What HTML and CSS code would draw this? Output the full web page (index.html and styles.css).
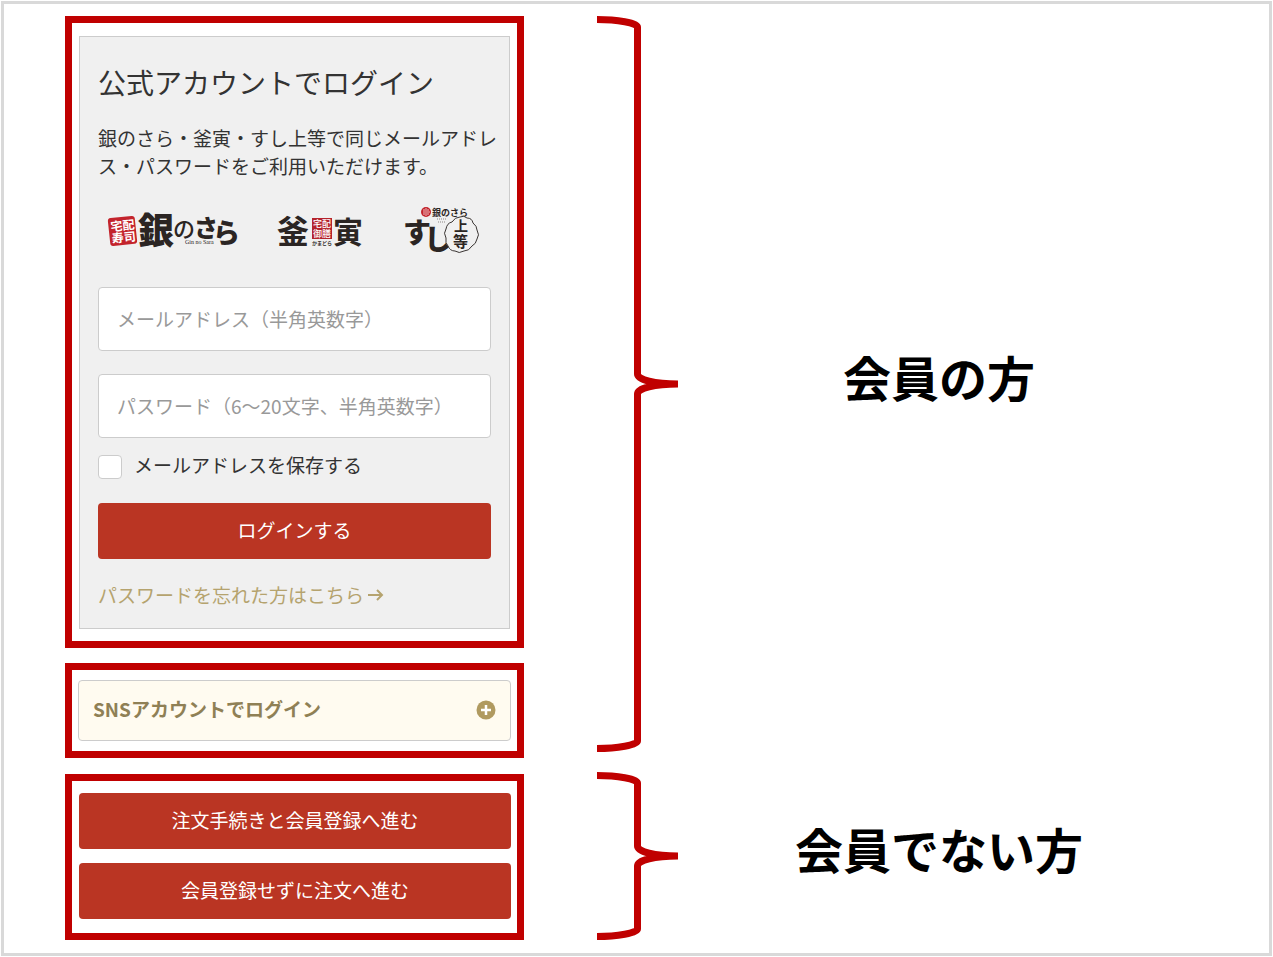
FILE: index.html
```html
<!doctype html>
<html lang="ja">
<head>
  <meta charset="utf-8">
  <meta content="width=device-width, initial-scale=1" name="viewport">
  <title>ログイン</title>

  <link rel="stylesheet" href="styles.css">
</head>
<body>
  <main class="slide">
    <section class="group members">
      <div class="frames">
        <div class="frame">
          <form class="panel">
            <h1>公式アカウントでログイン</h1>
            <p class="lead">銀のさら・釜寅・すし上等で同じメールアドレ<br>ス・パスワードをご利用いただけます。</p>

            <div class="logos">
              <svg width="130" height="52" viewBox="0 0 130 52" role="img" aria-label="銀のさら">
                <g transform="rotate(-6 15 26)">
                  <rect x="2" y="12" width="27" height="28" rx="3" fill="#c3242c"/>
                  <g fill="#fff" font-size="12" font-weight="700">
                    <text x="4" y="25">宅</text><text x="16" y="25">配</text>
                    <text x="4" y="37">寿</text><text x="16" y="37">司</text>
                  </g>
                </g>
                <g fill="#2b2523" font-weight="900">
                  <text x="31" y="39" font-size="36">銀</text>
                  <text x="66" y="32" font-size="22" font-weight="500">の</text>
                  <text x="87" y="32" font-size="24">さ</text>
                  <text x="106" y="38" font-size="27">ら</text>
                </g>
                <text class="roman" x="78" y="39" font-size="6">Gin no Sara</text>
              </svg>

              <svg width="86" height="52" viewBox="0 0 86 52" role="img" aria-label="釜寅">
                <g fill="#2b2523" font-weight="700">
                  <text x="0" y="38" font-size="32">釜</text>
                  <text x="56" y="38" font-size="30">寅</text>
                </g>
                <rect x="35" y="13" width="20" height="21" fill="#b5232c"/>
                <g fill="#fff" font-size="9" font-weight="500">
                  <text x="36" y="22">宅配</text>
                  <text x="36" y="32">御膳</text>
                </g>
                <text x="35" y="40" font-size="5" font-weight="700" fill="#2b2523">かまどら</text>
              </svg>

              <svg width="76" height="52" viewBox="0 0 76 52" role="img" aria-label="すし上等">
                <circle cx="23" cy="7" r="5" fill="#c3242c"/>
                <path d="M20 5h2M24 5h2M20 7h2M24 7h3M20 9h2M24 9h2M23 3v8" stroke="#fff" stroke-width="1" opacity=".7"/>
                <text x="29" y="11" font-size="9" font-weight="700" fill="#2b2523">銀のさら</text>
                <path d="M34 14h10M35 17h8" stroke="#8b8583" stroke-width="1" stroke-dasharray="1 1"/>
                <g fill="#2b2523" font-weight="900">
                  <text x="0" y="38" font-size="28">す</text>
                  <text x="21" y="45" font-size="28">し</text>
                </g>
                <path d="M57 12q4-2 7 1q5 0 6 5q4 3 4 7q3 5 0 9q-1 5-5 7q-3 5-8 5q-5 3-9 0q-5 0-7-5q-3-3-2-8q-3-5 0-9q1-6 6-7q3-5 8-5z" fill="#f0f0f0" stroke="#3a3533" stroke-width="1"/>
                <g fill="#2b2523" font-weight="700">
                  <text x="51" y="26" font-size="14">上</text>
                  <text x="50" y="42" font-size="15">等</text>
                </g>
              </svg>
            </div>

            <input class="field" type="email" placeholder="メールアドレス（半角英数字）" aria-label="メールアドレス">
            <input class="field" type="password" placeholder="パスワード（6～20文字、半角英数字）" aria-label="パスワード">

            <div class="remember">
              <input type="checkbox" id="remember">
              <label for="remember">メールアドレスを保存する</label>
            </div>

            <button class="btn" type="button">ログインする</button>

            <a class="forgot" href="#">パスワードを忘れた方はこちら<svg width="16" height="12" viewBox="0 0 16 12" fill="none" stroke="currentColor" stroke-width="2"><path d="M0 6h14M9 1l5 5l-5 5"/></svg></a>
          </form>
        </div>

        <div class="frame frame-sns">
          <button class="sns" type="button">
            <span>SNSアカウントでログイン</span>
            <svg width="20" height="20" viewBox="0 0 20 20"><circle cx="10" cy="10" r="9.500" fill="#b09a60"/><path d="M10 5v10M5 10h10" stroke="#fff" stroke-width="2.500"/></svg>
          </button>
        </div>
      </div>

      <div class="side">
        <svg class="brace" width="81" height="736" viewBox="0 0 81 736">
          <path d="M0 3.500C20 3.500 40.500 7 40.500 11V358C40.500 364 58 368 81 368C58 368 40.500 372 40.500 378V725C40.500 729 20 732.500 0 732.500"/>
        </svg>
        <h2>会員の方</h2>
      </div>
    </section>

    <section class="group guests">
      <div class="frames">
        <div class="frame frame-order">
          <button class="btn" type="button">注文手続きと会員登録へ進む</button>
          <button class="btn" type="button">会員登録せずに注文へ進む</button>
        </div>
      </div>

      <div class="side">
        <svg class="brace" width="81" height="168" viewBox="0 0 81 168">
          <path d="M0 3.500C20 3.500 40.500 7 40.500 11V74C40.500 80 58 84 81 84C58 84 40.500 88 40.500 94V157C40.500 161 20 164.500 0 164.500"/>
        </svg>
        <h2>会員でない方</h2>
      </div>
    </section>
  </main>
</body>
</html>
```
FILE: styles.css
```css
* {
  box-sizing: border-box;
  margin: 0; padding: 0;
}
body {
  background: #fff;
  color: #333;
  font-family: "Noto Sans CJK JP", sans-serif;
  font-size: 19px;
  line-height: 28px;
}
button, input {
  font: inherit;
}
.slide {
  display: flex;
  flex-direction: column;
  gap: 16px;
  min-height: calc(100vh - 2px);
  margin: 1px;
  padding: 12px 69px 12px 61px;
  border: 3px solid #d9d9d9;
}
.group {
  display: grid;
  grid-template-columns: 459px 1fr;
  column-gap: 73px;
  align-items: start;
}
.guests {
  align-items: end;
}
.frames {
  display: flex;
  flex-direction: column;
  gap: 15px;
}

/* Red outlined boxes */
.frame {
  padding: 13px 7px 12px;
  border: 7px solid #c00000;
}
.frame-sns {
  padding: 10px 6px;
}
.frame-order {
  display: flex;
  flex-direction: column;
  gap: 14px;
  padding: 12px 6px 14px 7px;
}

/* Login form */
.panel {
  padding: 25px 18px 19px;
  background: #f0f0f0;
  border: 1px solid #ccc;
}
.panel h1 {
  font-size: 28px;
  font-weight: 400;
  line-height: 40px;
}
.lead {
  margin-top: 22px;
  white-space: nowrap;
}
.logos {
  display: flex;
  justify-content: space-between;
  margin: 25px 0 30px;
  padding: 0 12px 0 9px;
}
.logos svg {
  overflow: visible;
}
.logos .roman {
  font-family: "Liberation Serif", serif;
  fill: #2b2523;
}
.field {
  display: block;
  width: 100%;
  height: 64px;
  padding: 0 18px 2px;
  background: #fff;
  border: 1px solid #ccc;
  border-radius: 4px;
}
.field + .field {
  margin-top: 23px;
}
.field::placeholder {
  color: #999;
}
.remember {
  display: flex;
  align-items: center;
  gap: 12px;
  height: 24px;
  margin: 17px 0 24px;
}
.remember input {
  appearance: none;
  width: 24px;
  height: 24px;
  background: #fff;
  border: 1px solid #ccc;
  border-radius: 4px;
}
.remember label {
  padding-bottom: 4px;
}
.btn {
  width: 100%;
  height: 56px;
  padding-bottom: 2px;
  background: #ba3523;
  border: 0;
  border-radius: 4px;
  color: #fff;
}
.forgot {
  display: flex;
  align-items: center;
  gap: 4px;
  margin-top: 22px;
  color: #b5a36e;
  text-decoration: none;
}
.sns {
  display: flex;
  align-items: center;
  justify-content: space-between;
  width: 100%;
  height: 61px;
  padding: 0 14px 2px;
  background: #fffbf0;
  border: 1px solid #ccc;
  border-radius: 4px;
  color: #8f8055;
  font-weight: 700;
}
.sns span {
  padding-bottom: 2px;
}

/* Braces and captions */
.side {
  display: grid;
  grid-template-columns: 81px 1fr;
  align-items: center;
}
.guests .side {
  margin-top: -2px;
}
.brace {
  fill: none;
  stroke: #c00000;
  stroke-width: 7;
}
.side h2 {
  padding-bottom: 16px;
  color: #000;
  font-size: 48px;
  line-height: 64px;
  text-align: center;
}
```
